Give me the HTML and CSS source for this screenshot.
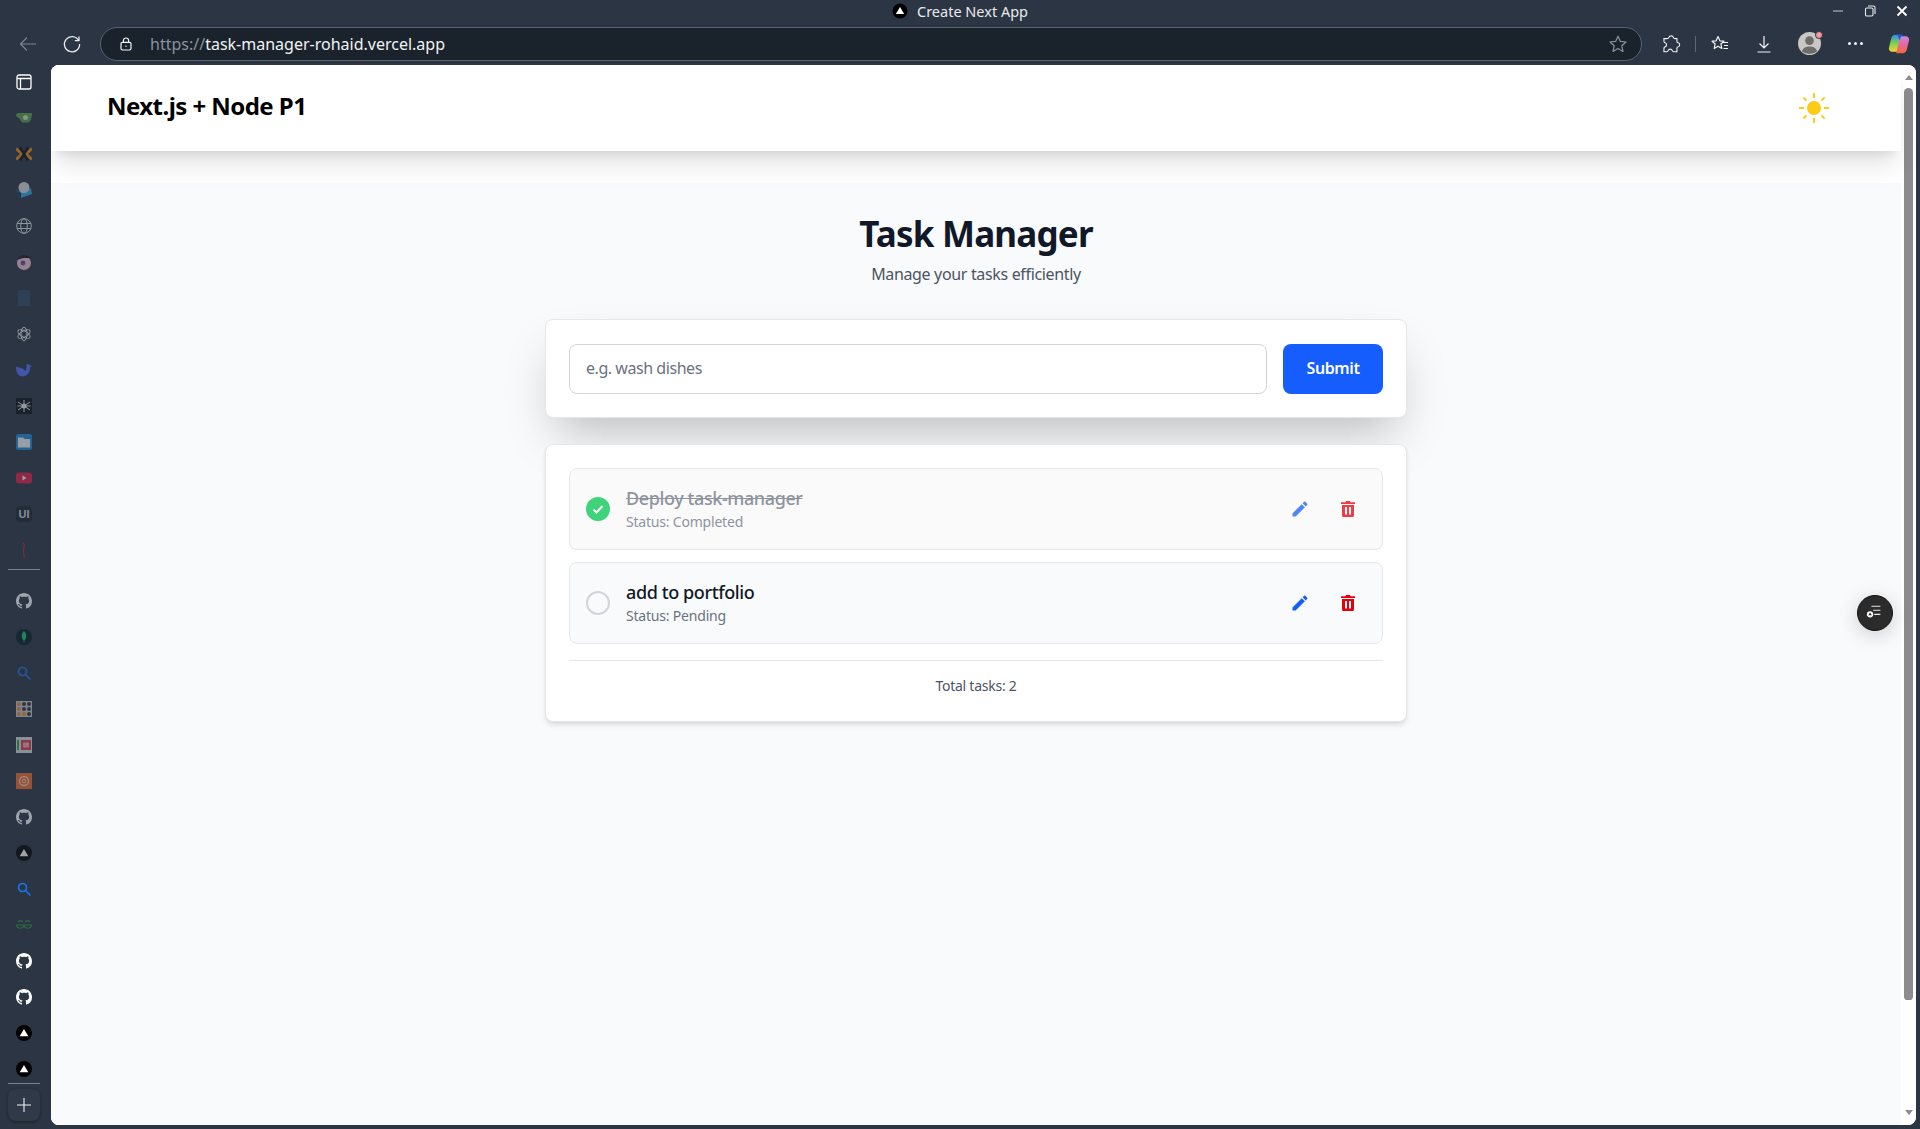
FILE: index.html
```html
<!DOCTYPE html>
<html lang="en">
<head>
    <meta charset="UTF-8">
    <title>Create Next App</title>
    <link rel="stylesheet" href="styles.css">
</head>
<body>
    <div class="titlebar">
        <svg class="title-logo" viewBox="0 0 16 16"><circle cx="8" cy="8" r="7.5" fill="#000"/><path d="M8 4l4.2 7H3.8z" fill="#fff"/></svg>
        <span class="title-text">Create Next App</span>
        <div class="win-controls">
            <svg viewBox="0 0 14 14"><path d="M2 7h10" stroke="#9aa0a8" stroke-width="1.4"/></svg>
            <svg viewBox="0 0 14 14" fill="none" stroke="#e8eaed" stroke-width="1.1"><rect x="2.5" y="4" width="7.5" height="8" rx="1.2"/><path d="M5 2h5.5A1.5 1.5 0 0 1 12 3.5V10"/></svg>
            <svg viewBox="0 0 14 14"><path d="M2.5 2.5l9 9M11.5 2.5l-9 9" stroke="#fff" stroke-width="1.8"/></svg>
        </div>
    </div>

    <div class="toolbar">
        <svg class="tool-icon back" viewBox="0 0 20 20" fill="none" stroke="#7d848d" stroke-width="1.2"><path d="M18 10H2.5M9 3.5L2.5 10 9 16.5"/></svg>
        <svg class="tool-icon reload" viewBox="0 0 20 20" fill="none" stroke="#e8eaed" stroke-width="1.3"><path d="M16.6 6.5A7.6 7.6 0 1 0 17.6 10M17 2.5v4.2h-4.2"/></svg>
        <div class="addressbar">
            <svg class="lock" viewBox="0 0 14 14" fill="none" stroke="#f1f3f4" stroke-width="1.2"><rect x="2" y="5.4" width="10" height="7.6" rx="1.4"/><path d="M4.4 5.4V3.6a2.6 2.6 0 0 1 5.2 0v1.8"/><circle cx="7" cy="9.2" r=".7" fill="#f1f3f4" stroke="none"/></svg>
            <span class="url"><span class="url-scheme">https://</span>task-manager-rohaid.vercel.app</span>
            <svg class="star" viewBox="0 0 20 20" fill="none" stroke="#8c929a" stroke-width="1.2" stroke-linejoin="round"><path d="M10 2.2l2.4 5.2 5.6.6-4.2 3.8 1.2 5.6L10 14.6l-5 2.8 1.2-5.6L2 8l5.6-.6z"/></svg>
        </div>
        <div class="tool-right">
            <svg class="ext" viewBox="0 0 20 20" fill="none" stroke="#f1f3f4" stroke-width="1"><path d="M8 4.2a2.2 2.2 0 0 1 4.2 0c.2 1 1 .9 2 .9h1.2v2.600c0 .9.5 1 1.200 1.200a1.900 1.900 0 0 1 0 3.600c-.7.2-1.200.4-1.200 1.200V17h-3c-.7 0-1-.4-1.200-1a2 2 0 0 0-3.800 0c-.2.6-.5 1-1.200 1H3.600v-3.200c0-.6.3-1 1-1.200a2 2 0 0 0 0-3.800c-.7-.2-1-.6-1-1.200V5.100H6c1 0 1.800.1 2-.9z"/></svg>
            <span class="tool-sep"></span>
            <svg class="fav" viewBox="0 0 20 20" fill="none" stroke="#f1f3f4" stroke-width="1.2" stroke-linejoin="round"><path d="M8 2.5l1.900 4.300 4 .4-3 2.800.9 4.500L8 12.200l-3.800 2.300.9-4.500-3-2.800 4-.4zM13 8.500h5M14 11.500h4M13.500 14.500h4.500"/></svg>
            <svg class="dl" viewBox="0 0 20 20" fill="none" stroke="#f1f3f4" stroke-width="1.2"><path d="M10 2v12M5.500 9.500L10 14l4.500-4.500M3.500 18h13"/></svg>
            <div class="avatar">
                <svg viewBox="0 0 24 24"><circle cx="12" cy="12" r="12" fill="#c9c7c3"/><circle cx="12" cy="9" r="4.5" fill="#6e6c69"/><path d="M4 20c1.500-4 4.500-5 8-5s6.500 1 8 5a12 12 0 0 1-16 0z" fill="#6e6c69"/></svg>
                <span class="avatar-dot"></span>
            </div>
            <span class="more"><i></i><i></i><i></i></span>
            <svg class="copilot" viewBox="0 0 24 24">
                <defs>
                    <linearGradient id="copA" x1="0" y1="0" x2="0" y2="1"><stop offset="0" stop-color="#2e8fe8"/><stop offset=".5" stop-color="#7fd04b"/><stop offset="1" stop-color="#f3d23a"/></linearGradient>
                    <linearGradient id="copB" x1="0" y1="0" x2="0" y2="1"><stop offset="0" stop-color="#c58be8"/><stop offset=".5" stop-color="#e9659a"/><stop offset="1" stop-color="#f5683c"/></linearGradient>
                </defs>
                <path d="M8 2h7l-4 17c-.3 1-1 1.500-2 1.500H5c-2.500 0-4.500-2-4-4.500L3.500 6c.5-2.500 2.500-4 4.500-4z" fill="url(#copA)"/>
                <path d="M16 22H9l4-17c.3-1 1-1.500 2-1.500h4c2.500 0 4.500 2 4 4.500L20.500 18c-.5 2.500-2.500 4-4.500 4z" fill="url(#copB)"/>
                <path d="M10 2h5c1 0 1.500.5 1.500 1.500h-1c-1 0-1.500.5-1.800 1.500L13 8z" fill="#1f55d8"/>
            </svg>
        </div>
    </div>

    <div class="window-body">
        <aside class="sidebar">
            <svg class="side-icon" viewBox="0 0 16 16" fill="none" stroke="#fff" stroke-width="1.3"><rect x="1" y="1" width="14" height="14" rx="2"/><path d="M1 4.500h14M4.500 4.500V15"/></svg>
            <svg class="side-icon dim" viewBox="0 0 16 16"><path d="M3 3h13c0 4-1 8-3.500 9.500h-6C4.500 11 3.500 9 3.200 8 1.500 8 0 6.500 0 5s1.500-2 3-2z" fill="#5aa344"/><circle cx="9.500" cy="7.500" r="2.500" fill="#d3dccb"/></svg>
            <svg class="side-icon dim" viewBox="0 0 16 16" fill="none" stroke-width="3"><path d="M0 2.500L6 8l-6 5.500M16 2.500L10 8l6 5.500" stroke="#f08a1c"/><path d="M4 1.500L12 14.500M12 1.500L4 14.500" stroke="#0d1116" stroke-width="2.400"/></svg>
            <svg class="side-icon dim" viewBox="0 0 16 16"><path d="M0 8l5 8 11-4-1-6-9 4z" fill="#32a6e6"/><path d="M0 8l5 3v5z" fill="#1c3040"/><circle cx="8" cy="5.500" r="5.500" fill="#d8dadd"/></svg>
            <svg class="side-icon dim" viewBox="0 0 16 16" fill="none" stroke="#e0e3e6" stroke-width="1"><circle cx="8" cy="8" r="7.3"/><ellipse cx="8" cy="8" rx="3.300" ry="7.300"/><path d="M1 5.500h14M1 10.500h14"/></svg>
            <svg class="side-icon dim" viewBox="0 0 16 16"><circle cx="8" cy="9" r="7" fill="#eec2d0"/><path d="M1.500 6c1-5 10-7 13-1.500C12 3.500 5 3.500 1.500 6z" fill="#1a1a22"/><circle cx="7" cy="9" r="2.400" fill="#7a3fa0"/></svg>
            <svg class="side-icon dim" viewBox="0 0 16 16"><rect x="2" y="0" width="12" height="16" fill="#2f4a66"/></svg>
            <svg class="side-icon dim" viewBox="0 0 16 16" fill="none" stroke="#e8eaed" stroke-width="1"><ellipse cx="8" cy="8" rx="3" ry="6.800"/><ellipse cx="8" cy="8" rx="3" ry="6.800" transform="rotate(60 8 8)"/><ellipse cx="8" cy="8" rx="3" ry="6.800" transform="rotate(120 8 8)"/></svg>
            <svg class="side-icon dim" viewBox="0 0 16 16"><path d="M0 5c3 0 7 1 9.500 4 1-2 1.500-4 1-7 1.500 0 3 .5 3.500 1.500l2 .5-2 1.500c0 5.500-3.500 9-7.500 9S0 10.500 0 5z" fill="#5470ff"/></svg>
            <svg class="side-icon dim" viewBox="0 0 16 16"><rect width="16" height="16" fill="#0d1116"/><path d="M8 2v12M2 4l12 8M14 4L2 12M1.500 8h13" stroke="#e8eaed" stroke-width="1"/><circle cx="8" cy="8" r="2.500" fill="#e8eaed"/></svg>
            <svg class="side-icon dim" viewBox="0 0 16 16"><rect width="16" height="16" rx="2" fill="#1d8ad8"/><path d="M2 3.500h5L8.500 5H14v8.500H2z" fill="#eef2f6"/></svg>
            <svg class="side-icon dim" viewBox="0 0 16 16"><rect y="2.500" width="16" height="11" rx="2.500" fill="#e0204f"/><path d="M6.500 5.500l4 2.500-4 2.500z" fill="#fff"/></svg>
            <span class="side-icon dim side-text">UI</span>
            <svg class="side-icon dim" viewBox="0 0 16 16" fill="none" stroke="#d42a3c" stroke-width="1"><path d="M7 .5c2 2 1 5 .5 7s1 6 .5 8"/></svg>
            <span class="side-sep"></span>
            <svg class="side-icon dim" viewBox="0 0 16 16"><use href="#gh"/></svg>
            <svg class="side-icon dim" viewBox="0 0 16 16"><circle cx="8" cy="8" r="8" fill="#061e2a"/><path d="M8 2c2.500 2.500 3.200 6 .5 9.500L8 14l-.5-2.500C4.800 8 5.500 4.500 8 2z" fill="#18c964"/></svg>
            <svg class="side-icon dim" viewBox="0 0 16 16" fill="none" stroke="#1a73e8" stroke-width="1.7"><circle cx="6.500" cy="6.500" r="4"/><path d="M9.500 9.500l5 5"/></svg>
            <svg class="side-icon dim" viewBox="0 0 16 16"><rect width="16" height="16" fill="#c4c8cc"/><g fill="#f08a2c"><circle cx="3" cy="3" r="2"/><circle cx="3" cy="8" r="2"/><circle cx="3" cy="13" r="2"/><circle cx="8" cy="13" r="2"/></g><g fill="#33383e"><circle cx="8" cy="3" r="2"/><circle cx="13" cy="3" r="2"/><circle cx="8" cy="8" r="2"/><circle cx="13" cy="8" r="2"/><circle cx="13" cy="13" r="2"/></g></svg>
            <svg class="side-icon dim" viewBox="0 0 16 16"><rect width="16" height="16" fill="#d8dcdf"/><rect x="1" y="3" width="2" height="10" fill="#2da44e"/><rect x="5" y="3" width="10" height="10" fill="#e03a4e"/><rect x="7" y="5.500" width="6" height="5" fill="#eda8b0"/></svg>
            <svg class="side-icon dim" viewBox="0 0 16 16"><rect width="16" height="16" fill="#f06a2c"/><circle cx="8" cy="8" r="4.500" fill="none" stroke="#f6ccb4" stroke-width="1.300"/><circle cx="8" cy="8" r="1.800" fill="none" stroke="#f6ccb4"/></svg>
            <svg class="side-icon dim" viewBox="0 0 16 16"><use href="#gh"/></svg>
            <svg class="side-icon dim" viewBox="0 0 16 16"><use href="#vercel"/></svg>
            <svg class="side-icon" viewBox="0 0 16 16" fill="none" stroke="#1a73e8" stroke-width="1.7"><circle cx="6.500" cy="6.500" r="4"/><path d="M9.500 9.500l5 5"/></svg>
            <svg class="side-icon dim" viewBox="0 0 16 16" fill="none" stroke="#2f9e44" stroke-width="1.100"><path d="M8 8h7.500a3.800 3.800 0 0 1-7.500 0 3.800 3.800 0 0 1-7.500 0H8M2 4.800a3.600 3.600 0 0 1 5 .2M14 4.800A3.600 3.600 0 0 0 9 5"/></svg>
            <svg class="side-icon" viewBox="0 0 16 16"><use href="#gh"/></svg>
            <svg class="side-icon" viewBox="0 0 16 16"><use href="#gh"/></svg>
            <svg class="side-icon" viewBox="0 0 16 16"><use href="#vercel"/></svg>
            <svg class="side-icon" viewBox="0 0 16 16"><use href="#vercel"/></svg>
            <span class="side-sep last"></span>
            <div class="side-add">
                <svg viewBox="0 0 16 16" stroke="#f1f3f4" stroke-width="1.100"><path d="M8 1v14M1 8h14"/></svg>
            </div>
        </aside>

        <div class="page">
            <div class="page-scroll">
                <header class="site-header">
                    <span class="brand">Next.js + Node P1</span>
                    <svg class="sun" viewBox="0 0 30 30" stroke="#facc15" stroke-width="2"><circle cx="15" cy="15" r="7" fill="#facc15" stroke="none"/><path d="M15 0v5M15 25v5M0 15h5M25 15h5M4.400 4.400l3.200 3.200M22.400 22.400l3.200 3.200M4.400 25.600l3.200-3.200M22.400 7.600l3.200-3.200"/></svg>
                </header>
                <main class="content">
                    <div class="container">
                        <h1 class="heading">Task Manager</h1>
                        <p class="subheading">Manage your tasks efficiently</p>

                        <form class="card add-form">
                            <input class="task-input" type="text" placeholder="e.g. wash dishes">
                            <button class="submit-btn" type="button">Submit</button>
                        </form>

                        <section class="card task-card">
                            <div class="task-item done">
                                <span class="check checked">
                                    <svg viewBox="0 0 24 24" fill="none" stroke="#fff" stroke-width="2"><path d="M7.500 12.500l3 3 6-6.500"/></svg>
                                </span>
                                <div class="task-text">
                                    <div class="task-title">Deploy task-manager</div>
                                    <div class="task-status">Status: Completed</div>
                                </div>
                                <button class="icon-btn edit" type="button"><svg viewBox="0 0 24 24"><path d="M3 17.250V21h3.750L17.810 9.940l-3.750-3.750L3 17.250zM20.710 7.040c.39-.39.39-1.020 0-1.410l-2.340-2.340c-.39-.39-1.020-.39-1.410 0l-1.830 1.830 3.750 3.750 1.830-1.830z"/></svg></button>
                                <button class="icon-btn del" type="button"><svg viewBox="0 0 14 16"><path fill-rule="evenodd" d="M5 0h4l.6 1.200H14V3H0V1.200h4.400zM1 4h12v10.500c0 .9-.6 1.500-1.500 1.500h-9C1.600 16 1 15.400 1 14.500zM4 6v7.500h2V6zm4 0v7.500h2V6z"/></svg></button>
                            </div>
                            <div class="task-item">
                                <span class="check"></span>
                                <div class="task-text">
                                    <div class="task-title">add to portfolio</div>
                                    <div class="task-status">Status: Pending</div>
                                </div>
                                <button class="icon-btn edit" type="button"><svg viewBox="0 0 24 24"><path d="M3 17.250V21h3.750L17.810 9.940l-3.750-3.750L3 17.250zM20.710 7.040c.39-.39.39-1.020 0-1.410l-2.340-2.340c-.39-.39-1.020-.39-1.410 0l-1.830 1.830 3.750 3.750 1.830-1.830z"/></svg></button>
                                <button class="icon-btn del" type="button"><svg viewBox="0 0 14 16"><path fill-rule="evenodd" d="M5 0h4l.6 1.200H14V3H0V1.200h4.400zM1 4h12v10.500c0 .9-.6 1.500-1.500 1.500h-9C1.600 16 1 15.400 1 14.500zM4 6v7.500h2V6zm4 0v7.500h2V6z"/></svg></button>
                            </div>
                            <div class="task-total">Total tasks: 2</div>
                        </section>
                    </div>
                </main>
                <button class="float-btn" type="button">
                    <svg viewBox="0 0 20 20" fill="none" stroke="#e8e8e8" stroke-width="1.200"><path d="M6 2.500h10M8 7h8M9 11.500h7"/><circle cx="4.500" cy="11.500" r="3.500" fill="#fff" stroke="none"/><path d="M4.500 9.500l2 3h-4z" fill="#2b2b2b" stroke="none"/></svg>
                </button>
            </div>
            <div class="scrollbar">
                <span class="scroll-arrow"></span>
                <span class="scroll-thumb"></span>
                <span class="scroll-arrow down"></span>
            </div>
        </div>
    </div>

    <svg class="defs" width="0" height="0">
        <defs>
            <path id="gh" fill="#fff" d="M8 0C3.580 0 0 3.580 0 8c0 3.540 2.290 6.530 5.470 7.590.4.070.55-.17.55-.38 0-.19-.01-.82-.01-1.490-2.010.37-2.530-.49-2.690-.94-.09-.23-.48-.94-.82-1.130-.28-.15-.68-.52-.01-.53.63-.01 1.080.58 1.230.82.720 1.210 1.870.87 2.330.66.070-.52.280-.87.510-1.070-1.780-.2-3.640-.89-3.640-3.950 0-.87.310-1.590.820-2.150-.08-.2-.36-1.020.08-2.120 0 0 .67-.21 2.200.82.640-.18 1.320-.27 2-.27.680 0 1.360.09 2 .27 1.530-1.040 2.200-.82 2.200-.82.440 1.100.160 1.920.080 2.120.510.560.820 1.270.820 2.150 0 3.070-1.870 3.750-3.650 3.950.290.250.540.730.540 1.480 0 1.070-.01 1.930-.01 2.200 0 .210.150.460.550.380A8.013 8.013 0 0 0 16 8c0-4.420-3.580-8-8-8z"/>
            <g id="vercel"><circle cx="8" cy="8" r="8" fill="#000"/><path d="M8 4l4.300 7.300H3.700z" fill="#fff"/></g>
        </defs>
    </svg>
</body>
</html>
```
FILE: styles.css
```css
* {
    box-sizing: border-box;
}

html, body {
    margin: 0;
    height: 100%;
    overflow: hidden;
}

body {
    background-color: #2b3543;
    font-family: "Noto Sans", sans-serif;
    display: flex;
    flex-direction: column;
    height: 1129px;
}

.defs {
    position: absolute;
}

/* browser chrome */
.titlebar {
    height: 22px;
    display: flex;
    align-items: center;
    justify-content: center;
    gap: 9px;
    position: relative;
    color: #e8eaed;
    font-size: 14.5px;
}

.title-logo {
    width: 16px;
    height: 16px;
}

.win-controls {
    position: absolute;
    right: 11px;
    top: 4px;
    display: flex;
    gap: 18px;
}

.win-controls svg {
    width: 14px;
    height: 14px;
}

.toolbar {
    height: 43px;
    display: flex;
    align-items: center;
    padding-left: 18px;
}

.tool-icon {
    width: 20px;
    height: 20px;
    flex: none;
}

.reload {
    margin-left: 24px;
}

.addressbar {
    width: 1542px;
    height: 34px;
    margin-left: 18px;
    background-color: #1a222c;
    border: 1px solid #5a626c;
    border-radius: 17px;
    display: flex;
    align-items: center;
    padding: 0 13px 0 18px;
    flex: none;
}

.lock {
    width: 14px;
    height: 14px;
    flex: none;
}

.url {
    margin-left: 17px;
    font-size: 16px;
    color: #f1f3f4;
    flex: 1;
}

.url-scheme {
    color: #8c929a;
}

.star {
    width: 20px;
    height: 20px;
}

.tool-right {
    display: flex;
    align-items: center;
    margin-left: 18px;
}

.tool-right svg {
    flex: none;
}

.ext {
    width: 22px;
    height: 22px;
}

.tool-sep {
    width: 1px;
    height: 16px;
    background-color: #5f6670;
    margin: 0 14px 0 13px;
}

.fav {
    width: 20px;
    height: 20px;
}

.dl {
    width: 20px;
    height: 20px;
    margin-left: 24px;
}

.avatar {
    position: relative;
    width: 23px;
    height: 23px;
    margin-left: 24px;
}

.avatar svg {
    width: 23px;
    height: 23px;
    display: block;
}

.avatar-dot {
    position: absolute;
    top: -1px;
    right: -2px;
    width: 8px;
    height: 8px;
    border-radius: 50%;
    background-color: #f59b9b;
    border: 1px solid #2b3543;
}

.more {
    display: flex;
    gap: 3px;
    margin-left: 27px;
}

.more i {
    width: 3px;
    height: 3px;
    background-color: #f1f3f4;
    border-radius: 50%;
}

.copilot {
    width: 22px;
    height: 22px;
    margin-left: 25px;
}

.window-body {
    flex: 1;
    display: flex;
    min-height: 0;
    padding-bottom: 4px;
}

.sidebar {
    width: 51px;
    flex: none;
    display: flex;
    flex-direction: column;
    align-items: center;
    padding-top: 9px;
    padding-right: 3px;
}

.side-icon {
    width: 16px;
    height: 16px;
    margin-bottom: 20px;
    flex: none;
}

.side-icon.dim {
    opacity: 0.55;
}

.side-text {
    font-size: 11px;
    font-weight: 700;
    color: #d3d6da;
    text-align: center;
    line-height: 16px;
    font-family: "Liberation Sans", sans-serif;
    background-color: #1e2632;
    border-radius: 4px;
}

.side-sep {
    width: 32px;
    height: 1px;
    background-color: #77808b;
    margin: -9px 0 23px;
    flex: none;
}

.side-sep.last {
    margin: -14px 0 0;
}

.side-add {
    margin-top: 5px;
    width: 32px;
    height: 32px;
    border-radius: 8px;
    background-color: #2f3947;
    box-shadow: 0 1px 3px rgba(0, 0, 0, 0.4);
    display: flex;
    align-items: center;
    justify-content: center;
}

.side-add svg {
    width: 16px;
    height: 16px;
}

.page {
    width: 1865px;
    flex: none;
    display: flex;
    background-color: #fff;
    border-radius: 8px;
    overflow: hidden;
}

.page-scroll {
    width: 1850px;
    flex: none;
    background-color: #fff;
    position: relative;
    display: flex;
    flex-direction: column;
}

/* scrollbar */
.scrollbar {
    width: 15px;
    flex: none;
    background-color: #fff;
    padding: 10px 3px 10px 3px;
    display: flex;
    flex-direction: column;
    align-items: center;
}

.scroll-arrow {
    width: 0;
    height: 0;
    border-left: 4.5px solid transparent;
    border-right: 4.5px solid transparent;
    border-bottom: 5px solid #8c8c8c;
}

.scroll-arrow.down {
    margin-top: auto;
    border-bottom: none;
    border-top: 5px solid #8c8c8c;
}

.scroll-thumb {
    width: 9px;
    height: 912px;
    margin-top: 8px;
    border-radius: 5px 5px 4px 4px;
    background-color: #8c8c8c;
}

/* the app */
.site-header {
    height: 86px;
    flex: none;
    padding: 0 72px 6px 56px;
    background-color: #fff;
    box-shadow: 0 20px 25px -5px rgba(0, 0, 0, 0.1), 0 8px 10px -6px rgba(0, 0, 0, 0.1);
    display: flex;
    align-items: center;
    justify-content: space-between;
    position: relative;
}

.brand {
    font-size: 24px;
    font-weight: 700;
    color: #000;
    letter-spacing: -0.55px;
}

.sun {
    width: 30px;
    height: 30px;
    margin-bottom: -6px;
}

.content {
    flex: 1;
    margin-top: 32px;
    padding-top: 31px;
    background-color: #f9fafb;
}

.container {
    width: 862px;
    margin: 0 auto;
}

.heading {
    margin: 0;
    font-size: 35px;
    line-height: 40px;
    font-weight: 700;
    text-align: center;
    color: #111827;
    letter-spacing: -0.8px;
}

.subheading {
    margin: 8px 0 0;
    font-size: 16px;
    line-height: 24px;
    text-align: center;
    color: #4b5563;
    letter-spacing: -0.34px;
}

.card {
    background-color: #fff;
    border: 1px solid #e5e7eb;
    border-radius: 8px;
}

.add-form {
    margin-top: 33px;
    height: 99px;
    padding: 24px 23px;
    display: flex;
    gap: 16px;
    box-shadow: 0 25px 50px -12px rgba(0, 0, 0, 0.25);
}

.task-input {
    flex: 1;
    min-width: 0;
    height: 50px;
    border: 1px solid #d1d5db;
    border-radius: 8px;
    padding: 0 16px 2px;
    font-family: inherit;
    font-size: 16px;
    letter-spacing: -0.45px;
    color: #111827;
    background-color: #fff;
}

.task-input::placeholder {
    color: #6b7280;
    opacity: 1;
}

.submit-btn {
    width: 100px;
    height: 50px;
    border: none;
    border-radius: 8px;
    padding: 0 0 2px;
    background-color: #155dfc;
    color: #fff;
    font-family: inherit;
    font-size: 16px;
    font-weight: 600;
    letter-spacing: -0.4px;
    cursor: pointer;
}

.task-card {
    margin-top: 26px;
    padding: 23px 23px 0;
    height: 278px;
    position: relative;
    box-shadow: 0 4px 6px -1px rgba(0, 0, 0, 0.1), 0 2px 4px -2px rgba(0, 0, 0, 0.1);
}

.task-item {
    height: 82px;
    margin-bottom: 12px;
    background-color: #f9fafb;
    border: 1px solid #e5e7eb;
    border-radius: 8px;
    padding: 0 17px 0 16px;
    display: flex;
    align-items: center;
}

.task-item.done {
    background-color: #fafafa;
}

.check {
    width: 24px;
    height: 24px;
    border-radius: 50%;
    border: 2px solid #d1d5db;
    flex: none;
}

.check.checked {
    border: none;
    background-color: #3fd37a;
}

.check svg {
    width: 24px;
    height: 24px;
    display: block;
}

.task-text {
    flex: 1;
    margin-left: 16px;
    padding-bottom: 2px;
}

.task-title {
    font-size: 18px;
    line-height: 28px;
    font-weight: 500;
    color: #111827;
    letter-spacing: -0.4px;
}

.task-status {
    font-size: 14px;
    line-height: 20px;
    color: #6b7280;
    letter-spacing: -0.2px;
}

.done .task-title {
    text-decoration: line-through;
    color: #6b7280;
}

.done .task-text,
.done .icon-btn {
    opacity: 0.75;
}

.icon-btn {
    width: 20px;
    height: 20px;
    padding: 0;
    border: none;
    background: none;
    display: flex;
    align-items: center;
    justify-content: center;
    cursor: pointer;
    margin-left: 28px;
}

.edit svg {
    width: 20px;
    height: 20px;
    fill: #155dfc;
}

.del svg {
    width: 14px;
    height: 16px;
    fill: #e7000b;
}

.icon-btn.del {
    margin-right: 7px;
}

.task-total {
    margin-top: 16px;
    border-top: 1px solid #e5e7eb;
    padding-top: 15px;
    font-size: 14px;
    line-height: 20px;
    text-align: center;
    color: #4b5563;
    letter-spacing: -0.25px;
}

.float-btn {
    position: absolute;
    top: 530px;
    right: 8px;
    width: 36px;
    height: 36px;
    border-radius: 50%;
    border: 1px solid #111;
    background-color: #2b2b2b;
    box-shadow: 0 4px 20px rgba(0, 0, 0, 0.18);
    padding: 8px;
}

.float-btn svg {
    width: 100%;
    height: 100%;
    display: block;
}
```
